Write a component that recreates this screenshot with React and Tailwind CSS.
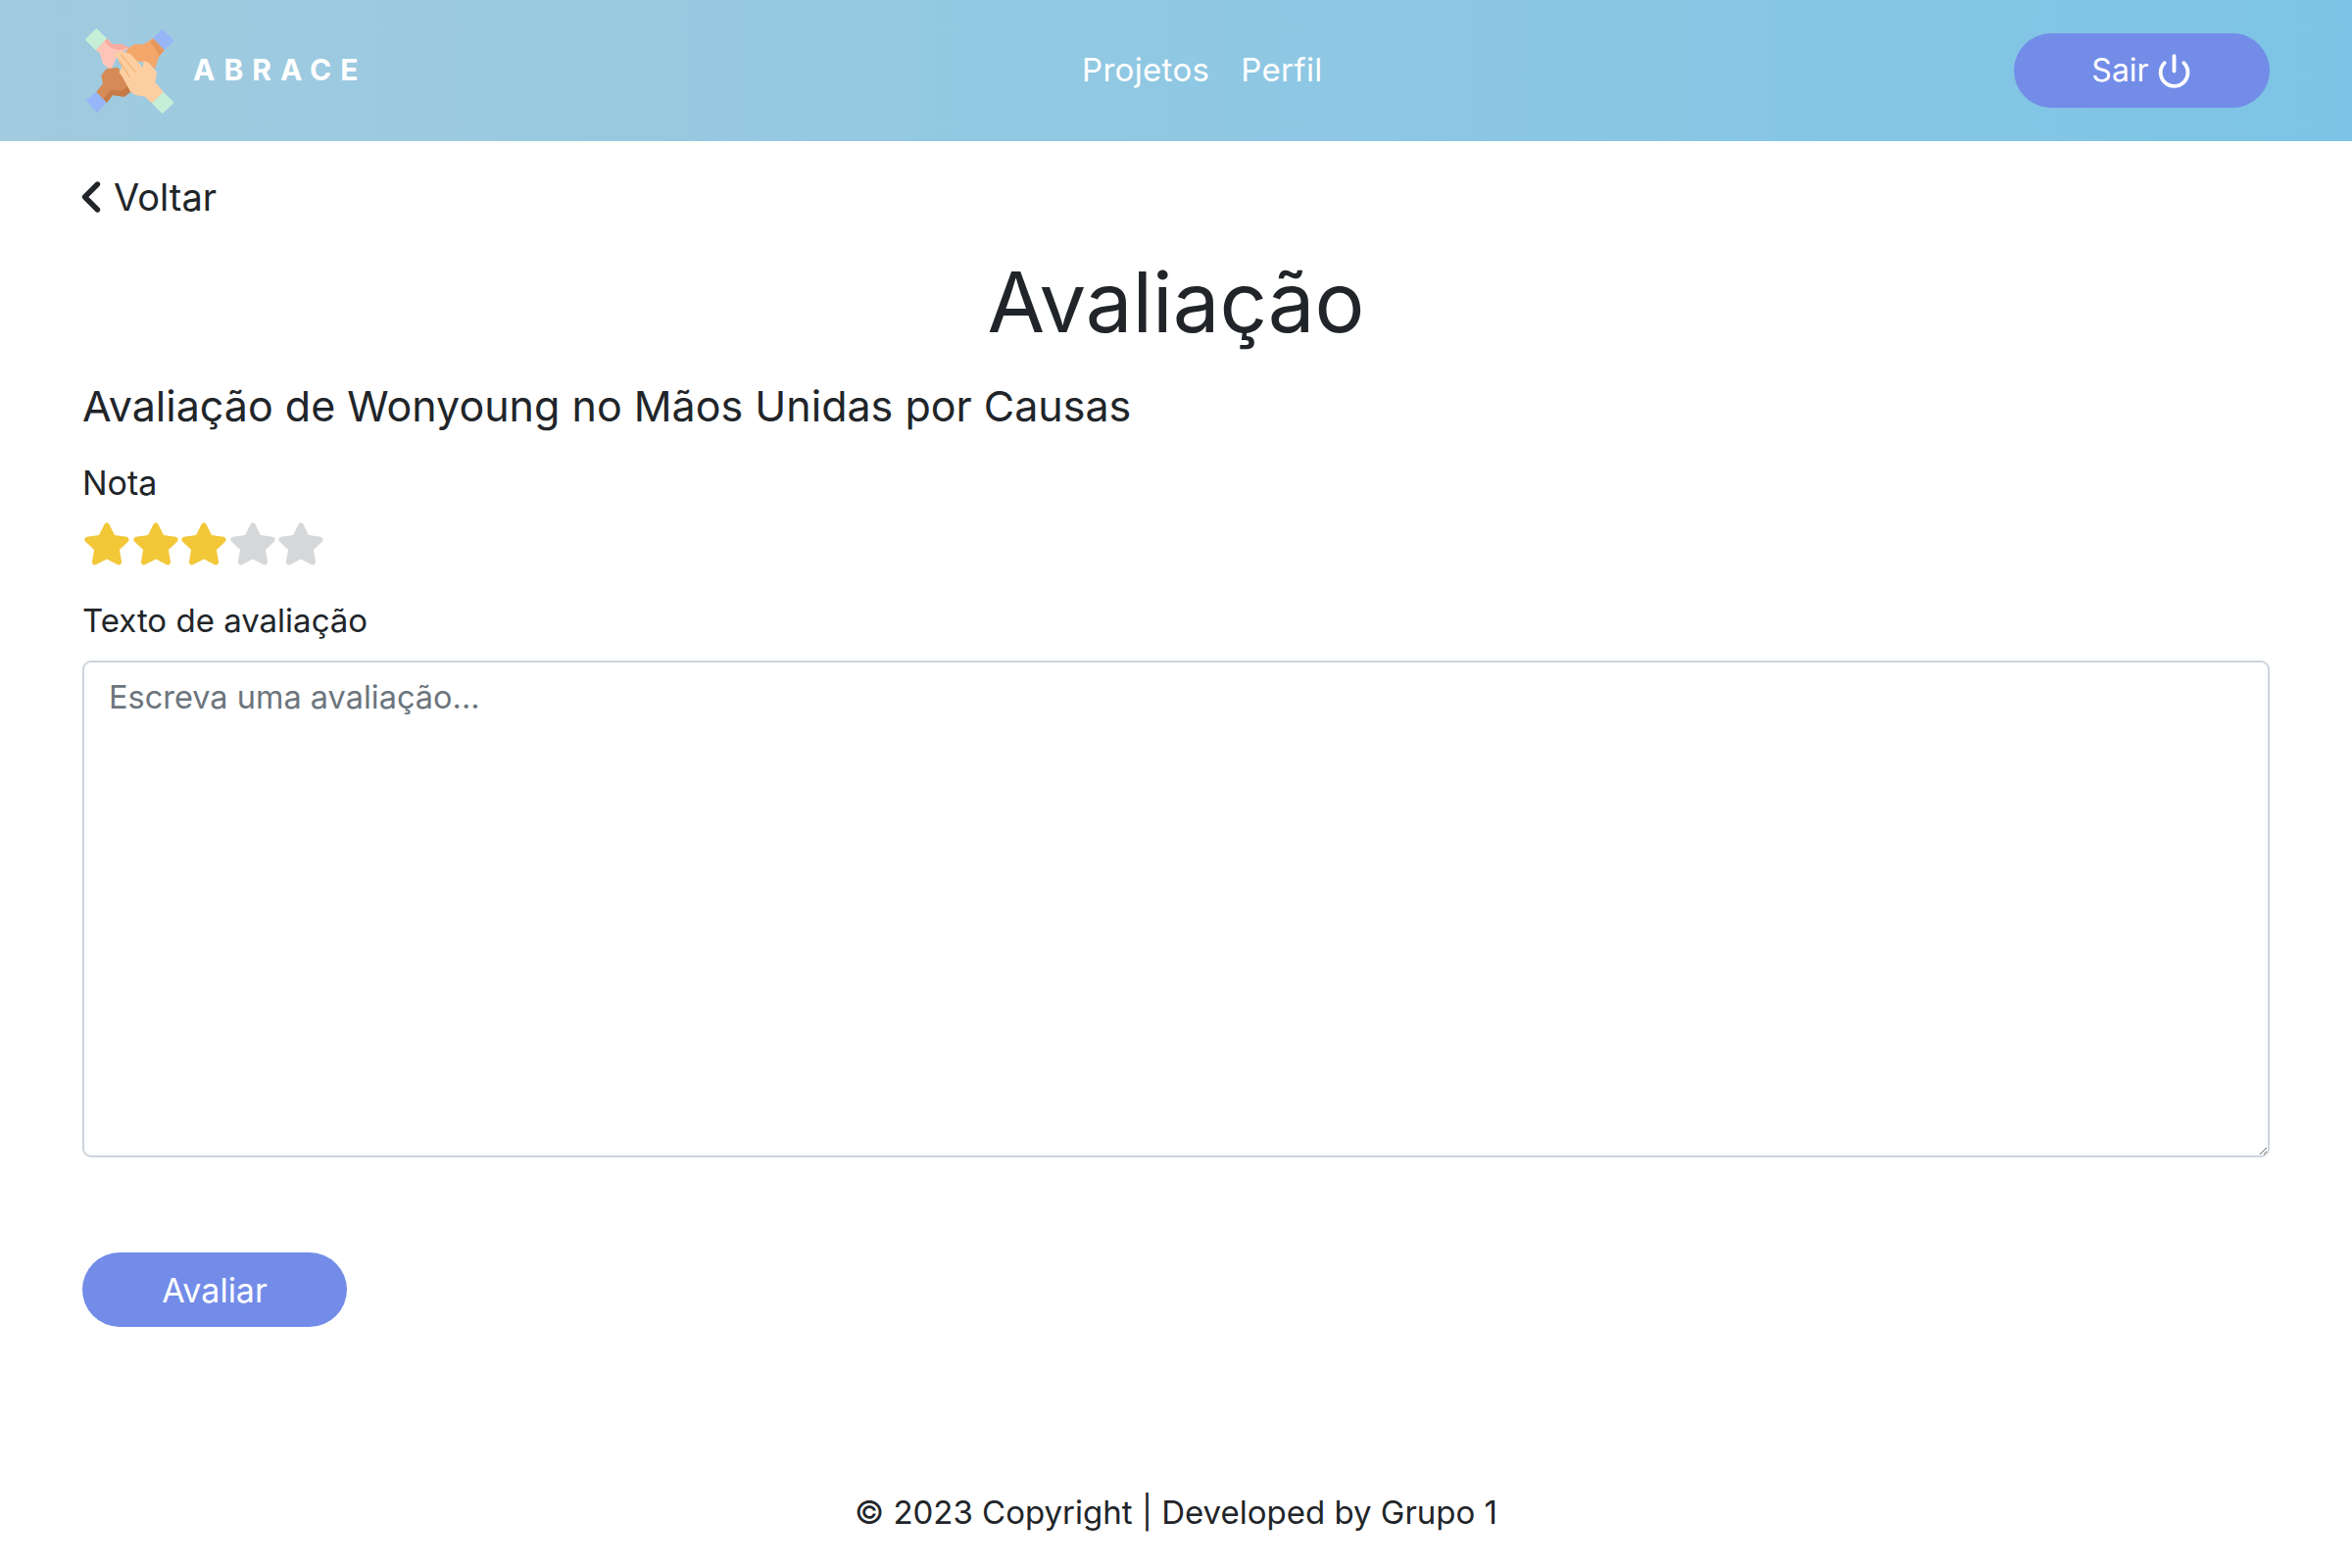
import React from 'react';
import { ChevronLeft, Power } from 'lucide-react';

// hands logo, coordinates follow a 3x crop of the original picture
const Logo = () => (
  <svg width="95" height="90" viewBox="80 85 285 270" className="shrink-0">
    <polygon points="85,125 120,90 152,122 118,158" fill="#c6efd8" />
    <polygon points="293,122 322,93 358,128 328,158" fill="#97b6f8" />
    <polygon points="88,312 120,285 152,318 122,350" fill="#97b6f8" />
    <polygon points="290,320 325,285 358,318 322,352" fill="#c6efd8" />
    <path d="M152,122 L170,140 L195,138 L222,150 L185,172 L165,218 L140,200 L130,165 L118,158Z" fill="#fdc5b8" />
    <path d="M152,122 L170,140 L195,138 L222,150 L190,158 L165,152 L145,132Z" fill="#f7aca0" />
    <path d="M293,122 L265,140 L235,140 L215,155 L205,185 L270,195 L300,215 L310,180 L328,158Z" fill="#f4a76b" />
    <path d="M293,122 L328,158 L312,175 L303,158 L285,132Z" fill="#e8975c" />
    <path d="M152,318 L170,295 L205,300 L225,285 L210,240 L185,210 L150,215 L135,235 L140,260 L120,285Z" fill="#d68a55" />
    <path d="M152,318 L170,295 L205,300 L225,285 L215,268 L195,283 L165,278 L142,307Z" fill="#c67a45" />
    <path d="M290,320 L325,285 L300,255 L305,225 L280,195 L265,190 L262,210 L225,170 L195,160 L175,170 L200,205 L190,225 L200,240 L225,285 L240,295 L270,300Z" fill="#fdcfa0" />
    <path d="M195,170 L240,225 M190,190 L222,240" stroke="#f5b982" strokeWidth="5" fill="none" />
  </svg>
);

const Star = ({ filled }) => (
  <svg width="50" height="48" viewBox="0 0 24 23" className="shrink-0 -mr-[0.5px]">
    <path
      d="M12 1.2 C12.6 1.2 13 1.5 13.3 2.1 L15.8 7.2 L21.6 8 C22.8 8.2 23.3 9.5 22.4 10.4 L18.2 14.4 L19.2 20.1 C19.4 21.4 18.2 22.2 17.1 21.6 L12 18.9 L6.9 21.6 C5.8 22.2 4.6 21.4 4.8 20.1 L5.8 14.4 L1.6 10.4 C0.7 9.5 1.2 8.2 2.4 8 L8.2 7.2 L10.7 2.1 C11 1.5 11.4 1.2 12 1.2Z"
      fill={filled ? '#f2c738' : '#d6d7d9'}
    />
  </svg>
);

export default function App() {
  return (
    <div className="min-h-[1600px] bg-white font-['Inter','Noto_Sans',sans-serif] text-[#212529] flex flex-col">
      <header className="h-[144px] bg-gradient-to-r from-[#a1cbdf] to-[#7dc4e6] pl-[85px] pr-[84px] flex items-center">
        <div className="w-[1019px] flex items-center gap-[17px]">
          <Logo />
          <span className="text-white font-bold text-[30px] tracking-[0.3em] leading-none -mt-0.5">ABRACE</span>
        </div>
        <nav className="flex items-center gap-[32px] text-white text-[33px] tracking-[0.01em]">
          <a>Projetos</a>
          <a>Perfil</a>
        </nav>
        <div className="flex flex-1 justify-end">
          <button className="w-[261px] h-[76px] rounded-full bg-[#728ce8] text-white text-[32px] flex items-center justify-center gap-[7px]">
            Sair
            <Power size={37} strokeWidth={2.5} />
          </button>
        </div>
      </header>

      <main className="px-[84px] flex-1 flex flex-col">
        <a className="flex items-center mt-[34px] h-[46px] text-[38px] -ml-[17px]">
          <ChevronLeft size={52} strokeWidth={2.5} />
          <span className="-ml-[3px]">Voltar</span>
        </a>
        <h1 className="text-center text-[85px] leading-[96px] mt-[37px]">Avaliação</h1>
        <h2 className="text-[43px] leading-[50px] mt-[32px]">
          Avaliação de Wonyoung no Mãos Unidas por Causas
        </h2>
        <label className="text-[34px] leading-[40px] mt-[34px]">Nota</label>
        <div className="flex mt-[17px] h-[50px] items-center">
          {[true, true, true, false, false].map((filled, i) => (
            <Star key={i} filled={filled} />
          ))}
        </div>
        <label className="text-[33px] leading-[40px] mt-[33px]">Texto de avaliação</label>
        <textarea
          placeholder="Escreva uma avaliação..."
          className="mt-[21px] h-[507px] w-full rounded-[9px] border-2 border-[#ced4da] px-[25px] py-[16px] text-[32.5px] leading-[40px] placeholder:text-[#6c757d] outline-none"
        />
        <div className="mt-[97px]">
          <button className="w-[270px] h-[76px] rounded-full bg-[#728ce8] text-white text-[34px]">Avaliar</button>
        </div>
      </main>

      <footer className="text-center text-[33px] leading-[40px] pb-[37px]">
        © 2023 Copyright | Developed by Grupo 1
      </footer>
    </div>
  );
}
